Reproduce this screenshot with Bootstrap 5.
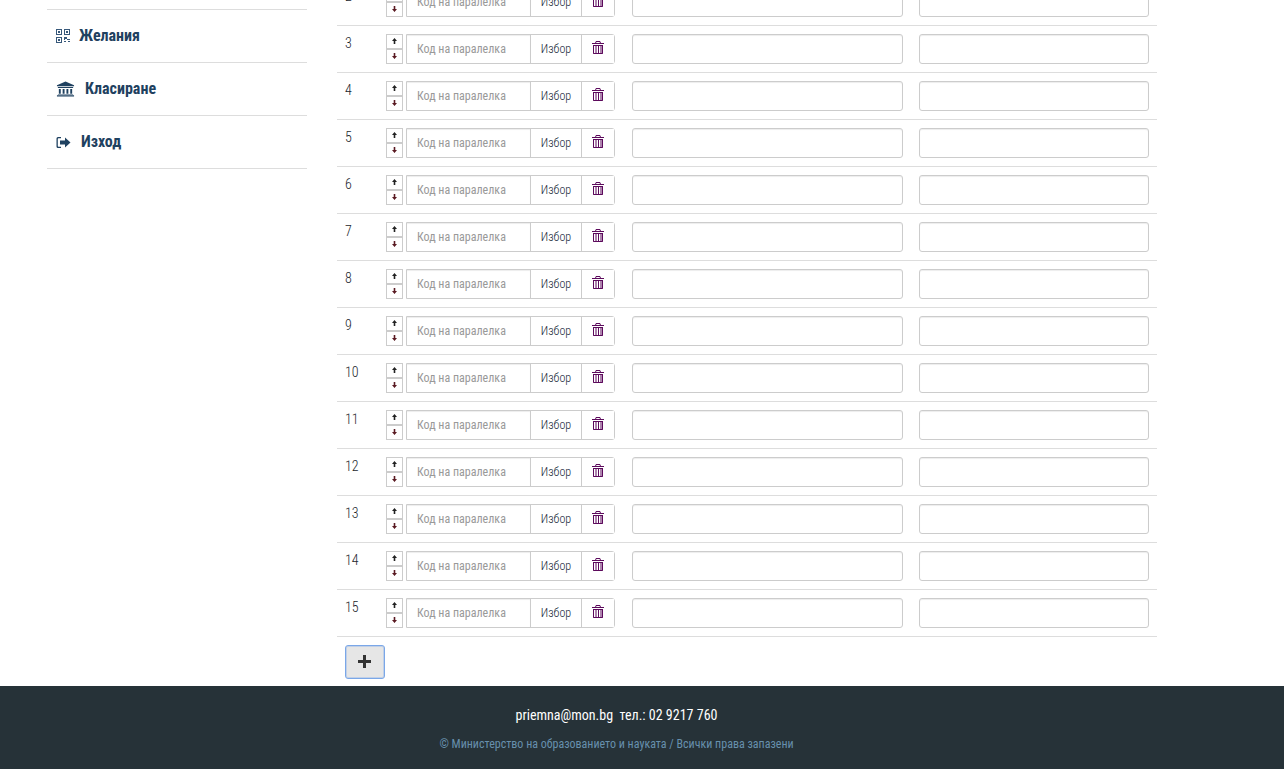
<!doctype html>
<html lang="bg">
<head>
    <meta charset="utf-8">
    <meta name="viewport" content="width=device-width, initial-scale=1">
    <title>Желания</title>
    <link href="https://cdn.jsdelivr.net/npm/bootstrap@5.3.3/dist/css/bootstrap.min.css" rel="stylesheet">
    <style>
        html, body { height: 769px; overflow: hidden; }
        body { font-family: "Roboto Condensed", "Liberation Sans Narrow", Roboto, sans-serif; font-stretch: condensed; color: #37474f; background: #fff; }
        .page-shift { margin-top: -22px; height: 708px; padding-left: 47px; }
        .side-col { width: 260px; padding-top: 31px; }
        .side-link { height: 53px; border-bottom: 1px solid #ddd; color: #1f4160; font-size: 16px; font-weight: 700; text-decoration: none; padding-left: 9px; }
        .side-first { border-top: 1px solid #ddd; height: 54px; }
        .icon-qr { margin-right: 9px; }
        .icon-bank { margin-right: 10px; }
        .icon-out { margin-right: 10px; }
        .main-col { width: 820px; margin-left: 30px; padding-top: 1px; }
        .wish-row { height: 47px; border-bottom: 1px solid #ddd; padding: 8px 8px 0; }
        .row-num { width: 41px; font-size: 14px; font-weight: 300; line-height: 18px; color: #1b262c; }
        .move-btns { width: 17px; height: 30px; margin-right: 3px; }
        .move-btn { height: 15px; border: 1px solid #ccc; background: #fff; line-height: 0; }
        .move-btn svg { margin-bottom: 1px; }
        .code-group { width: 209px; height: 30px; border: 1px solid #ccc; border-radius: 0 3px 3px 0; font-size: 12px; margin-right: 17px; }
        .code-input { width: 124px; border: 0; border-right: 1px solid #ccc; padding: 0 10px; font-size: 12px; box-shadow: inset 0 1px 1px rgba(0,0,0,.075); outline: 0; background: #fff; }
        .code-input::placeholder { color: #999; opacity: 1; }
        .pick-btn { width: 51px; border: 0; border-right: 1px solid #ccc; background: #fff; color: #0f1c33; font-size: 12px; font-weight: 300; padding: 0; }
        .trash-btn { width: 32px; border: 0; background: #fff; padding: 0; line-height: 0; }
        .trash-btn svg { margin-bottom: 3px; }
        .plain-input { height: 30px; border: 1px solid #ccc; border-radius: 3px; box-shadow: inset 0 1px 1px rgba(0,0,0,.075); outline: 0; }
        .input-wide { width: 271px; margin-right: 16px; }
        .input-side { width: 230px; }
        .add-btn { display: block; width: 40px; height: 34px; margin: 8px 0 0 8px; background: #e6e6e6; border: 1px solid #7aa7e8; border-radius: 3px; box-shadow: inset 0 0 0 1px rgba(122,167,232,.35); color: #333; padding: 0; line-height: 0; }
        .add-btn svg { margin: 0 2px 2px 0; }
        .site-foot { height: 83px; background: #263238; padding-right: 51px; text-align: center; padding-top: 20px; }
        .foot-main { color: #fff; font-size: 14px; font-weight: 400; line-height: 18px; }
        .foot-copy { color: #6790ad; font-size: 12px; line-height: 16px; margin-top: 12px; }
    </style>
</head>
<body>
    <div class="page-shift d-flex">
        <div class="side-col">
            <a class="side-link side-first d-flex align-items-center" href="#">
                <svg class="icon-qr" width="14" height="14" viewBox="0 0 14 14" fill="none" stroke="#37587a" stroke-width="1"><rect x=".5" y=".5" width="5" height="5"/><rect x="8.500" y=".5" width="5" height="5"/><rect x=".5" y="8.500" width="5" height="5"/><path fill="#37587a" stroke="none" d="M2 2h2v2H2zM10 2h2v2h-2zM2 10h2v2H2zM8 8h3v2h3v1h-3v-1H9v1H8zM8 12h2v1H8zM12 12h2v1h-2z"/></svg>
                Желания
            </a>
            <a class="side-link d-flex align-items-center" href="#">
                <svg class="icon-bank" width="19" height="16" viewBox="0 0 20 16" fill="#1f4160"><path d="M10 0l9 4v1H1V4zM2 6h16v1H2zM3 8h2v5H3zM7 8h2v5H7zM11 8h2v5h-2zM15 8h2v5h-2zM2 13.500h16V14H2zM1 14.500h18V16H1z"/></svg>
                Класиране
            </a>
            <a class="side-link d-flex align-items-center" href="#">
                <svg class="icon-out" width="15" height="13" viewBox="0 0 15 13" fill="#1f4160"><path d="M5 1H2a1.500 1.500 0 0 0-1.500 1.500v8A1.500 1.500 0 0 0 2 12h3v-1.200H2.500a.7.7 0 0 1-.7-.7v-7.200a.7.7 0 0 1 .7-.7H5z"/><path d="M4 4.500h5V1.500l5.500 5-5.500 5v-3H4z"/></svg>
                Изход
            </a>
        </div>
        <div class="main-col" id="rows"></div>
    </div>
    <footer class="site-foot">
        <div class="foot-main">priemna@mon.bg &nbsp;тел.: 02 9217 760</div>
        <div class="foot-copy">© Министерство на образованието и науката / Всички права запазени</div>
    </footer>

    <script>
        const upIcon = '<svg width="5" height="6" viewBox="0 0 5 6" fill="#222"><path d="M2.500 0L5 3H3.300v3H1.700V3H0z"/></svg>';
        const downIcon = '<svg width="5" height="6" viewBox="0 0 5 6" fill="#5a1a22"><path d="M2.500 6L0 3h1.700V0h1.600v3H5z"/></svg>';
        const trashIcon = '<svg width="12" height="13" viewBox="0 0 12 13" fill="#5c0a5c"><path fill-rule="evenodd" d="M4 0h4l1 2h3v1H0V2h3zM4.500 1L4 2h4l-.5-1zM1 4h10v8.500l-.5.500h-9l-.5-.500zm1 1v7h1.500V5zm2.500 0v7H6V5zm2.500 0v7h1.500V5zM9.500 5H10v7h-.5z"/></svg>';
        let html = "";
        for (let i = 2; i <= 15; i++) {
            html += `
            <div class="wish-row d-flex">
                <div class="row-num">${i}</div>
                <div class="move-btns d-flex flex-column">
                    <button class="move-btn d-flex align-items-center justify-content-center p-0" type="button">${upIcon}</button>
                    <button class="move-btn d-flex align-items-center justify-content-center p-0" type="button">${downIcon}</button>
                </div>
                <div class="code-group d-flex">
                    <input class="code-input" type="text" placeholder="Код на паралелка">
                    <button class="pick-btn" type="button">Избор</button>
                    <button class="trash-btn" type="button">${trashIcon}</button>
                </div>
                <input class="plain-input input-wide" type="text">
                <input class="plain-input input-side" type="text">
            </div>`;
        }
        html += `<button class="add-btn" type="button"><svg width="13" height="13" viewBox="0 0 13 13" fill="#333"><path d="M5 0h3v5h5v3H8v5H5V8H0V5h5z"/></svg></button>`;
        document.getElementById("rows").innerHTML = html;
    </script>
    <script src="https://cdn.jsdelivr.net/npm/bootstrap@5.3.3/dist/js/bootstrap.bundle.min.js"></script>
</body>
</html>
